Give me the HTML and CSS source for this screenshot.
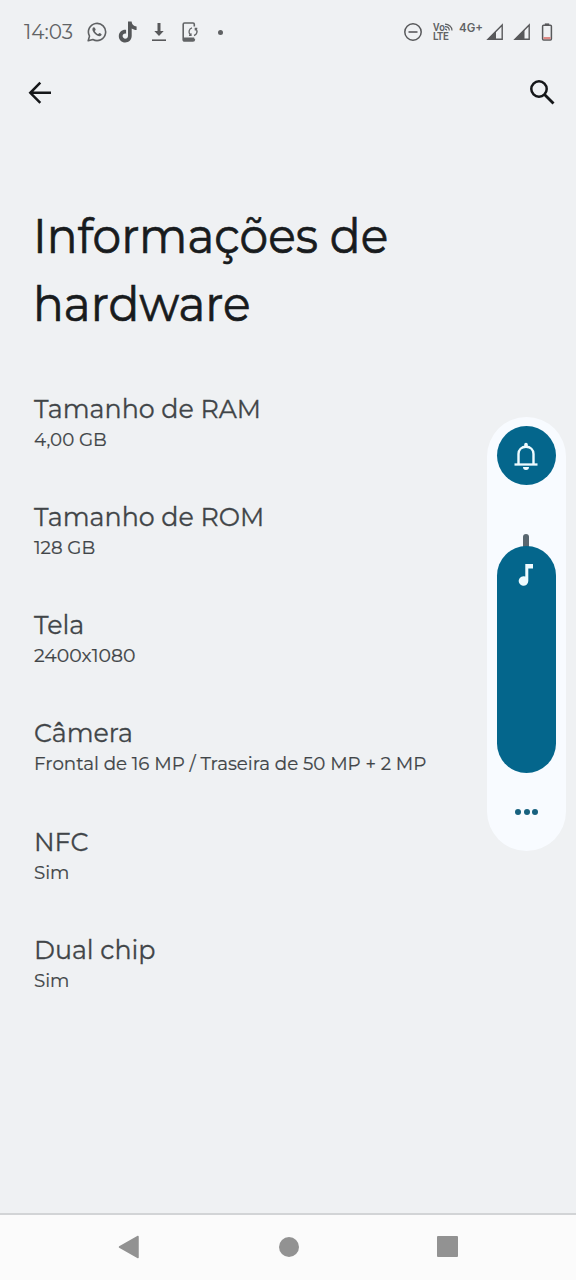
FILE: index.html
```html
<!DOCTYPE html>
<html lang="pt-BR">
<head>
<meta charset="utf-8">
<title>Informações de hardware</title>
<link rel="stylesheet" href="styles.css">
</head>
<body>
<div class="screen">
  <header class="status">
    <span class="clock">14:03</span>
    <svg class="whatsapp" width="20" height="20" viewBox="0 0 20 20"><path d="M1.2 18.8l1.3-4.7a8.600 8.600 0 1 1 3.400 3.400z" fill="none" stroke="#5f6163" stroke-width="1.600" stroke-linejoin="round"/><path d="M6.800 5.200c-.6 0-1.400.8-1.400 2 0 2.900 4.100 7 7.100 7 1.300 0 2.200-.8 2.200-1.600 0-.7-1.700-1.700-2.300-1.700-.5 0-.8 1.100-1.300 1.100-.9 0-3.300-2.200-3.300-3 0-.4.9-.8.9-1.300 0-.5-.9-2.500-1.900-2.500z" fill="#5f6163"/></svg>
    <svg class="tiktok" width="20" height="22" viewBox="0 0 20 22"><path d="M10 .5h3.600c.2 2.800 2 4.700 5 4.900v3.700c-1.900 0-3.600-.6-4.900-1.500v7.200c0 4.100-3 6.700-6.500 6.700C3.600 21.500.8 18.700.8 15.200c0-4 3.300-6.700 7.300-6.300v3.800c-1.900-.5-3.500.7-3.500 2.400 0 1.500 1.200 2.600 2.600 2.600 1.600 0 2.800-1.100 2.800-2.900z" fill="#555759"/></svg>
    <svg class="download" width="16" height="20" viewBox="0 0 16 20"><path d="M6.500 1h3v8h3.200L8 14 3.300 9h3.200z" fill="#58595b"/><path d="M1 18.200h14" stroke="#58595b" stroke-width="1.600"/></svg>
    <svg class="sync" width="17" height="20" viewBox="0 0 17 20"><path d="M12.300 4.500V2.300a1.300 1.300 0 0 0-1.300-1.300H2.500a1.300 1.300 0 0 0-1.300 1.300v15.400A1.300 1.300 0 0 0 2.500 19H11a1.300 1.300 0 0 0 1.300-1.300v-1" fill="none" stroke="#626466" stroke-width="1.600"/><path d="M1.200 15.500h11v2.200A1.300 1.300 0 0 1 11 19H2.500a1.300 1.300 0 0 1-1.300-1.300z" fill="#626466"/><path d="M10 5.900a4 4 0 0 0-1.700 6.800M7 13.300l2 .1-.1-2M12 13.500a4 4 0 0 0 1.900-6.600M15.300 6.500l-2-.1.1 2" fill="none" stroke="#626466" stroke-width="1.300"/></svg>
    <span class="dot"></span>
    <svg class="dnd" width="20" height="20" viewBox="0 0 20 20"><circle cx="10" cy="10" r="8.200" fill="none" stroke="#58595b" stroke-width="1.500"/><path d="M5.500 10h9" stroke="#58595b" stroke-width="1.600"/></svg>
    <span class="volte"><span class="vo">Vo<svg width="8" height="8" viewBox="0 0 8 8"><path d="M0 1.200c4 0 7 2.800 7 6.300M0 3.700c2.500 0 4.300 1.700 4.300 3.800M0 6.200c1 0 1.700.5 1.700 1.300" fill="none" stroke="#5f6163" stroke-width="1.200"/></svg></span><span class="lte">LTE</span></span>
    <span class="net">4G+</span>
    <svg class="signal" width="18" height="18" viewBox="0 0 18 18"><path d="M16.200 2v14.200H2z" fill="none" stroke="#58595b" stroke-width="1.400"/><path d="M10 8v8.500H1.500z" fill="#58595b"/></svg>
    <svg class="signal second" width="18" height="18" viewBox="0 0 18 18"><path d="M16.200 2v14.200H2z" fill="none" stroke="#58595b" stroke-width="1.400"/><path d="M11.500 6.500v10h-10z" fill="#58595b"/></svg>
    <svg class="battery" width="12" height="18" viewBox="0 0 12 18"><path d="M3.800.4h4.400v2H3.800z" fill="#58595b"/><rect x="1.600" y="2.300" width="8.800" height="14.600" rx="1" fill="none" stroke="#58595b" stroke-width="1.500"/><path d="M2.400 14h7.200v2.200H2.400z" fill="#df8a86"/></svg>
  </header>

  <nav class="toolbar">
    <svg width="24" height="24" viewBox="0 0 24 24"><path d="M23 12.800H2.500M12.300 2.700L2.300 12.800l10 10" fill="none" stroke="#151719" stroke-width="2.500"/></svg>
    <svg width="26" height="26" viewBox="0 0 26 26"><circle cx="10" cy="10" r="7.700" fill="none" stroke="#151719" stroke-width="2.500"/><path d="M15.500 15.500l9 9" stroke="#151719" stroke-width="2.800"/></svg>
  </nav>

  <main class="content">
    <h1 class="title">Informações de<br>hardware</h1>
    <dl class="specs">
      <div class="item"><dt>Tamanho de RAM</dt><dd>4,00 GB</dd></div>
      <div class="item"><dt>Tamanho de ROM</dt><dd>128 GB</dd></div>
      <div class="item"><dt>Tela</dt><dd class="pixels">2400x1080</dd></div>
      <div class="item"><dt>Câmera</dt><dd>Frontal de 16 MP / Traseira de 50 MP + 2 MP</dd></div>
      <div class="item"><dt>NFC</dt><dd>Sim</dd></div>
      <div class="item"><dt>Dual chip</dt><dd>Sim</dd></div>
    </dl>
  </main>

  <footer class="navbar">
    <svg width="22" height="24" viewBox="0 0 22 24"><path d="M20 1.500v21L1.500 12z" fill="#929292" stroke="#929292" stroke-width="1.500" stroke-linejoin="round"/></svg>
    <span class="home"></span>
    <span class="recent"></span>
  </footer>

  <aside class="volume">
    <div class="ringer"><svg width="24" height="28" viewBox="0 0 24 28"><path d="M4.500 22.500V12c0-4.300 3.100-7.200 7.500-7.200s7.500 2.900 7.500 7.200v10.500" fill="none" stroke="#eefbff" stroke-width="2.400"/><path d="M.5 22.500h23" stroke="#eefbff" stroke-width="2.300"/><path d="M10.200 4.500V2.600a1.800 1.800 0 0 1 3.600 0v1.900zM9 25h6a3 3 0 0 1-6 0z" fill="#eefbff"/></svg></div>
    <div class="track"></div>
    <div class="slider"><svg width="16" height="22" viewBox="0 0 16 22"><path d="M7.300 0H15v4.500h-4.700v12.600a4.800 4.800 0 1 1-3-4.600z" fill="#eefbff"/></svg></div>
    <div class="more"><i></i><i></i><i></i></div>
  </aside>
</div>
</body>
</html>
```
FILE: styles.css
```css
* { box-sizing: border-box; }
body { margin: 0; background: #eff1f3; font-family: Montserrat, Inter, sans-serif; }
svg { display: block; flex: none; }
.screen { position: relative; display: flex; flex-direction: column; width: 576px; height: 1280px; overflow: hidden; background: #eff1f3; }

.status { display: flex; align-items: center; height: 64px; padding: 0 23px 0 24px; color: #616365; }
.clock { width: 63px; font-size: 20px; letter-spacing: 0; white-space: nowrap; }
.tiktok { margin-left: 11px; }
.download { margin-left: 13px; }
.sync { margin-left: 15px; }
.dot { width: 5px; height: 5px; margin-left: 19px; border-radius: 50%; background: #5f6163; }
.dnd { margin-left: auto; }
.volte { display: flex; flex-direction: column; width: 21px; margin: -1px 0 0 10px; font-family: Roboto, sans-serif; font-size: 10px; line-height: 9px; font-weight: 600; }
.vo { display: flex; gap: 0.5px; }
.lte { letter-spacing: -0.2px; }
.net { width: 27px; margin: -9px 0 0 5px; font-family: Inter, sans-serif; font-size: 11.5px; line-height: 12px; font-weight: 600; white-space: nowrap; }
.second { margin-left: 9px; }
.battery { margin-left: 10px; }

.toolbar { display: flex; justify-content: space-between; align-items: center; height: 56px; padding: 0 21px 0 28px; }

.content { flex: 1; padding: 82px 34px 0; }
.title { margin: 0 0 0 -1px; font-size: 49px; line-height: 67.5px; font-weight: 400; color: #181b1d; white-space: nowrap; transform: scaleX(0.93); transform-origin: left; -webkit-text-stroke: 0.7px #181b1d; }
.specs { display: flex; flex-direction: column; gap: 45.300px; margin: 53.500px 0 0; color: #414548; white-space: nowrap; }
.item dt { font-size: 26.8px; line-height: 35px; transform: scaleX(0.945); transform-origin: left; -webkit-text-stroke: 0.3px #414548; }
.item dd { margin: 0; font-size: 19.4px; line-height: 27.500px; padding-bottom: 0.5px; transform: scaleX(0.94); transform-origin: left; -webkit-text-stroke: 0.2px #414548; }
.item dd.pixels { transform: scaleX(0.972); }

.navbar { display: flex; align-items: center; height: 67px; padding: 0 118px 2px; justify-content: space-between; background: #fbfbfb; border-top: 2px solid #d2d4d6; }
.home { width: 20px; height: 20px; border-radius: 50%; background: #929292; }
.recent { width: 21px; height: 21px; border-radius: 1px; background: #929292; }

.volume { position: absolute; left: 487px; top: 417px; display: flex; flex-direction: column; align-items: center; width: 79px; height: 434px; padding-top: 9px; border-radius: 40px; background: #f8fbff; }
.ringer { display: flex; align-items: center; justify-content: center; width: 59px; height: 59px; padding-right: 1px; border-radius: 50%; background: #04668c; }
.track { width: 6px; height: 14px; margin: 49px 1px 0 0; border-radius: 3px 3px 0 0; background: #596770; }
.slider { display: flex; justify-content: center; width: 59px; height: 227px; margin-top: -2px; padding: 18px 1px 0 0; border-radius: 30px; background: #04668c; }
.more { display: flex; gap: 2.500px; margin-top: 36px; }
.more i { width: 6px; height: 6px; border-radius: 50%; background: #17617f; }
```
